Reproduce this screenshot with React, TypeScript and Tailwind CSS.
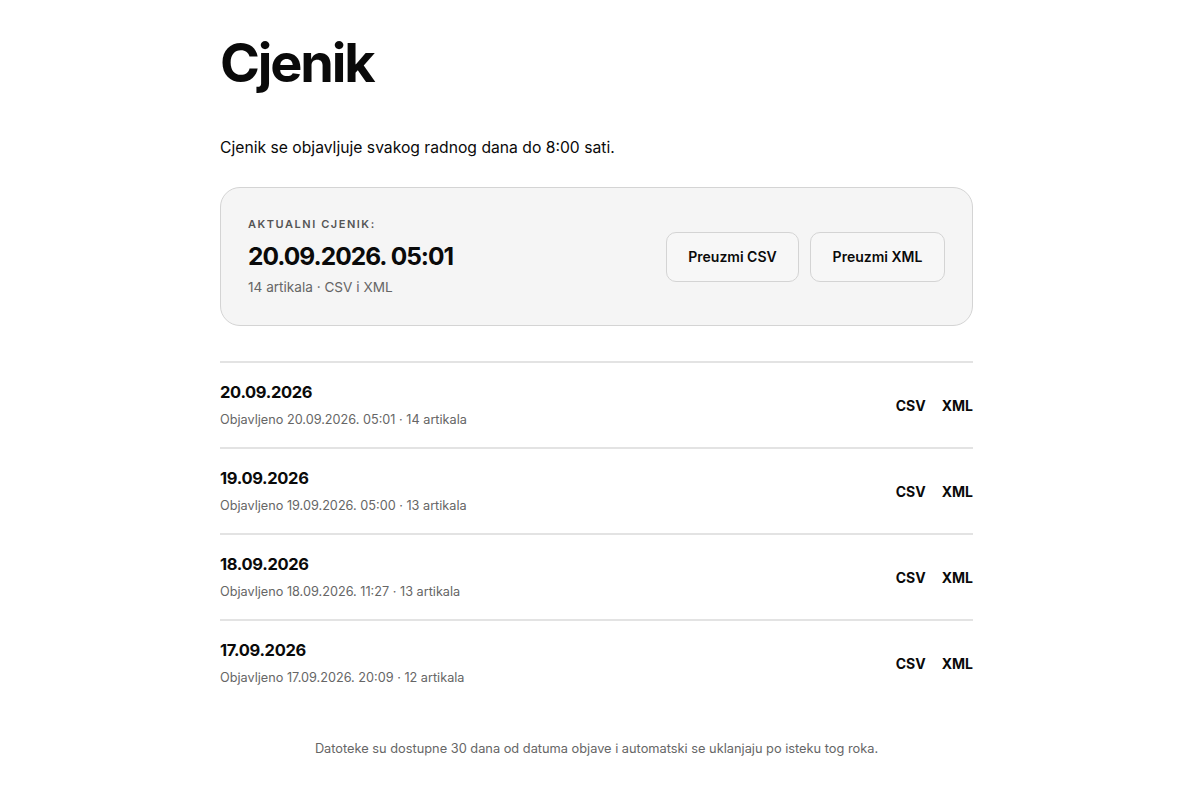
const ROWS = [
  { date: "20.09.2026", published: "20.09.2026. 05:01", count: 14 },
  { date: "19.09.2026", published: "19.09.2026. 05:00", count: 13 },
  { date: "18.09.2026", published: "18.09.2026. 11:27", count: 13 },
  { date: "17.09.2026", published: "17.09.2026. 20:09", count: 12 },
]

export default function App() {
  return (
    <div
      className="min-h-screen bg-white pr-[7px] text-[#0a0a0a]"
      style={{ fontFamily: "Inter, 'Liberation Sans', sans-serif" }}
    >
      <div className="mx-auto w-[753px] pt-[36px]">
        <h1 className="text-[54px] font-bold leading-none tracking-[-0.04em]">Cjenik</h1>

        <p className="mt-[46px] text-[15.7px] leading-6">
          Cjenik se objavljuje svakog radnog dana do 8:00 sati.
        </p>

        {/* Current price list */}
        <div className="mt-[27px] flex items-center justify-between rounded-[20px] border border-[#d4d4d4] bg-[#f5f5f5] px-[27px] pt-[28px] pb-[28px]">
          <div>
            <p className="text-[11px] font-semibold uppercase leading-4 tracking-[0.14em] text-[#555]">
              Aktualni cjenik:
            </p>
            <p className="mt-[8px] text-[24.5px] font-bold leading-8 tracking-[-0.04em]">
              20.09.2026. 05:01
            </p>
            <p className="mt-[5px] text-[13.6px] leading-5 text-[#666]">14 artikala · CSV i XML</p>
          </div>
          <div className="flex gap-[11px]">
            <button className="h-[50px] w-[133px] rounded-[10px] border border-[#d4d4d4] bg-[#f7f7f7] text-[14px] font-semibold">
              Preuzmi CSV
            </button>
            <button className="h-[50px] w-[135px] rounded-[10px] border border-[#d4d4d4] bg-[#f7f7f7] text-[14px] font-semibold">
              Preuzmi XML
            </button>
          </div>
        </div>

        {/* Archive */}
        <div className="mt-[35px]">
          {ROWS.map((r) => (
            <div
              key={r.date}
              className="flex h-[86px] items-center justify-between border-t-2 border-[#e3e3e3]"
            >
              <div>
                <p className="text-[16.5px] font-bold leading-6 tracking-[-0.02em]">{r.date}</p>
                <p className="mt-[6px] text-[12.7px] leading-5 text-[#666]">
                  Objavljeno {r.published} · {r.count} artikala
                </p>
              </div>
              <div className="flex gap-[16px] text-[14px] font-bold">
                <span>CSV</span>
                <span>XML</span>
              </div>
            </div>
          ))}
        </div>

        <p className="mt-[34px] text-center text-[12.8px] leading-5 text-[#666]">
          Datoteke su dostupne 30 dana od datuma objave i automatski se uklanjaju po isteku tog roka.
        </p>
      </div>
    </div>
  )
}
